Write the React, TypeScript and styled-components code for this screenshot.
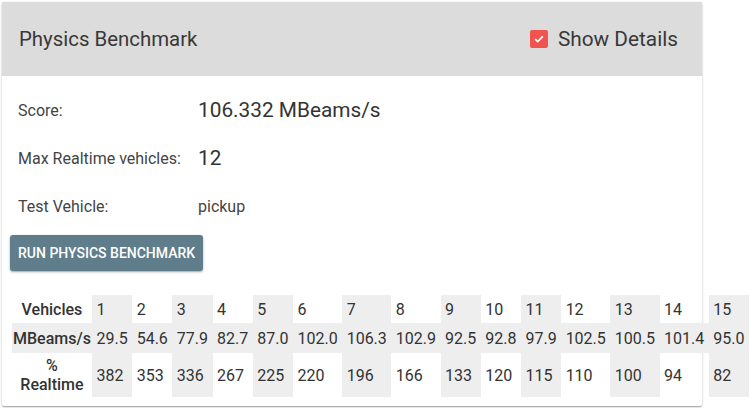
import * as React from 'react';
import styled, { createGlobalStyle } from 'styled-components';

const GlobalStyle = createGlobalStyle`
  body {
    margin: 0;
    background: #fff;
    font-family: Roboto, 'Liberation Sans', sans-serif;
  }
`;

const Root = styled.div`
  padding: 2px;
`;

const Card = styled.div`
  width: 700px;
  background: #fff;
  border-radius: 2px;
  box-shadow: 0 1px 3px rgba(0, 0, 0, 0.2), 0 1px 1px rgba(0, 0, 0, 0.14),
    0 2px 1px -1px rgba(0, 0, 0, 0.12);
`;

const Header = styled.div`
  height: 74px;
  background: #dcdcdc;
  display: flex;
  align-items: center;
  justify-content: space-between;
  padding: 0 24px 0 17px;
  color: #383838;
`;

const Title = styled.div`
  font-size: 20.4px;
`;

const Toggle = styled.label`
  display: flex;
  align-items: center;
  gap: 10px;
  font-size: 20.8px;
`;

const CheckBox = styled.span`
  width: 18px;
  height: 18px;
  border-radius: 2px;
  background: #f0544f;
  display: flex;
  align-items: center;
  justify-content: center;
`;

const Body = styled.div`
  padding: 10px 8px 9px;
`;

const InfoRow = styled.div`
  height: 48px;
  display: flex;
  align-items: center;
  color: #444;
  font-size: 16px;
`;

const InfoLabel = styled.div`
  width: 180px;
  padding-left: 8px;
  flex-shrink: 0;
`;

const InfoValue = styled.div<{ big?: boolean }>`
  font-size: ${(p) => (p.big ? '20.8px' : '16px')};
  color: ${(p) => (p.big ? '#333' : '#444')};
`;

const RunButton = styled.button`
  margin-top: 5px;
  height: 36px;
  padding: 0 8px;
  border: none;
  border-radius: 3px;
  background: #607d8b;
  color: #fff;
  font-family: Roboto, sans-serif;
  font-weight: 500;
  font-size: 14px;
  text-transform: uppercase;
  box-shadow: 0 1px 3px rgba(0, 0, 0, 0.25), 0 1px 1px rgba(0, 0, 0, 0.14);
`;

const Table = styled.table`
  margin: 24px 0 0 2px;
  border-collapse: collapse;
  border-spacing: 0;
  color: #333;
  font-size: 16px;
  white-space: nowrap;
`;

const Row = styled.tr<{ shade?: boolean; h: number }>`
  height: ${(p) => p.h}px;
  background: ${(p) => (p.shade ? '#eeeeee' : 'transparent')};
`;

const Label = styled.th`
  font-weight: 500;
  text-align: center;
  padding: 0 1px;
  line-height: 19px;
  white-space: normal;
`;

const Cell = styled.td<{ shade?: boolean }>`
  padding: 0 4.5px;
  text-align: left;
  background: ${(p) => (p.shade ? '#eeeeee' : 'transparent')};
`;

const vehicles = ['1', '2', '3', '4', '5', '6', '7', '8', '9', '10', '11', '12', '13', '14', '15'];
const beams = ['29.5', '54.6', '77.9', '82.7', '87.0', '102.0', '106.3', '102.9', '92.5', '92.8', '97.9', '102.5', '100.5', '101.4', '95.0'];
const realtime = ['382', '353', '336', '267', '225', '220', '196', '166', '133', '120', '115', '110', '100', '94', '82'];

export default function App() {
  return (
    <Root>
      <GlobalStyle />
      <Card>
        <Header>
          <Title>Physics Benchmark</Title>
          <Toggle>
            <CheckBox>
              <svg width="12" height="12" viewBox="0 0 12 12">
                <path d="M2.2 6.2 L4.8 8.6 L9.8 3.4" stroke="#fff" strokeWidth="1.8" fill="none" />
              </svg>
            </CheckBox>
            Show Details
          </Toggle>
        </Header>
        <Body>
          <InfoRow>
            <InfoLabel>Score:</InfoLabel>
            <InfoValue big>106.332 MBeams/s</InfoValue>
          </InfoRow>
          <InfoRow>
            <InfoLabel>Max Realtime vehicles:</InfoLabel>
            <InfoValue big>12</InfoValue>
          </InfoRow>
          <InfoRow>
            <InfoLabel>Test Vehicle:</InfoLabel>
            <InfoValue>pickup</InfoValue>
          </InfoRow>
          <RunButton>Run Physics Benchmark</RunButton>
          <Table>
            <tbody>
              <Row h={28}>
                <Label>Vehicles</Label>
                {vehicles.map((v, i) => (
                  <Cell key={v} shade={i % 2 === 0}>{v}</Cell>
                ))}
              </Row>
              <Row h={30} shade>
                <Label>MBeams/s</Label>
                {beams.map((v, i) => (
                  <Cell key={i} shade={i % 2 === 0}>{v}</Cell>
                ))}
              </Row>
              <Row h={44}>
                <Label>
                  %<br />
                  Realtime
                </Label>
                {realtime.map((v, i) => (
                  <Cell key={i} shade={i % 2 === 0}>{v}</Cell>
                ))}
              </Row>
            </tbody>
          </Table>
        </Body>
      </Card>
    </Root>
  );
}
